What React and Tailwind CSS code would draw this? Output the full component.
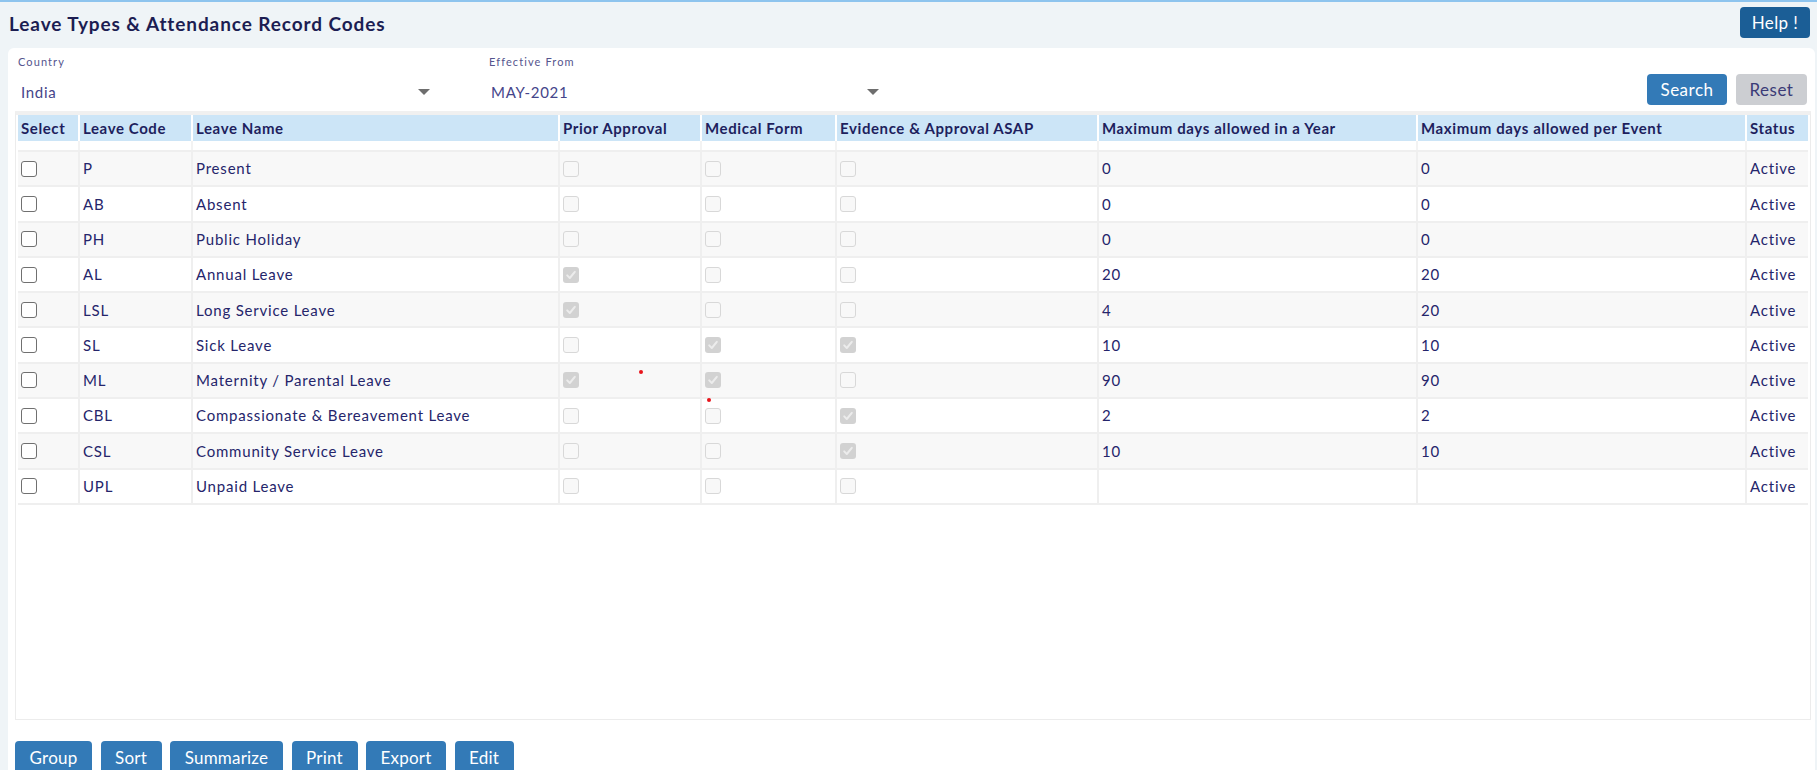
import React from 'react';

const cols = 'grid grid-cols-[60px_111px_365px_140px_133px_260px_317px_327px_61px] gap-x-[2px]';

const headers = [
  'Select',
  'Leave Code',
  'Leave Name',
  'Prior Approval',
  'Medical Form',
  'Evidence & Approval ASAP',
  'Maximum days allowed in a Year',
  'Maximum days allowed per Event',
  'Status',
];

const rows = [
  { code: 'P', name: 'Present', prior: false, medical: false, evidence: false, year: '0', event: '0' },
  { code: 'AB', name: 'Absent', prior: false, medical: false, evidence: false, year: '0', event: '0' },
  { code: 'PH', name: 'Public Holiday', prior: false, medical: false, evidence: false, year: '0', event: '0' },
  { code: 'AL', name: 'Annual Leave', prior: true, medical: false, evidence: false, year: '20', event: '20' },
  { code: 'LSL', name: 'Long Service Leave', prior: true, medical: false, evidence: false, year: '4', event: '20' },
  { code: 'SL', name: 'Sick Leave', prior: false, medical: true, evidence: true, year: '10', event: '10' },
  { code: 'ML', name: 'Maternity / Parental Leave', prior: true, medical: true, evidence: false, year: '90', event: '90' },
  { code: 'CBL', name: 'Compassionate & Bereavement Leave', prior: false, medical: false, evidence: true, year: '2', event: '2' },
  { code: 'CSL', name: 'Community Service Leave', prior: false, medical: false, evidence: true, year: '10', event: '10' },
  { code: 'UPL', name: 'Unpaid Leave', prior: false, medical: false, evidence: false, year: '', event: '' },
];

const actions = [
  { label: 'Group', w: 'w-[77px]' },
  { label: 'Sort', w: 'w-[61px]' },
  { label: 'Summarize', w: 'w-[113px]' },
  { label: 'Print', w: 'w-[66px]' },
  { label: 'Export', w: 'w-[80px]' },
  { label: 'Edit', w: 'w-[59px]' },
];

function Box({ checked, disabled }) {
  if (!disabled) {
    return <div className="w-4 h-4 rounded-[3px] border-[1.5px] border-[#707070] bg-white" />;
  }
  if (checked) {
    return (
      <div className="w-4 h-4 rounded-[3px] bg-[#d2d2d2] flex items-center justify-center">
        <svg width="12" height="12" viewBox="0 0 12 12">
          <path d="M2.2 6.4 L4.8 9 L9.8 2.8" fill="none" stroke="#ececec" strokeWidth="2" strokeLinecap="round" strokeLinejoin="round" />
        </svg>
      </div>
    );
  }
  return <div className="w-4 h-4 rounded-[3px] border-[1.5px] border-[#d8d8d8] bg-[#f8f8f8]" />;
}

function Caret() {
  return <div className="w-0 h-0 border-l-[6px] border-r-[6px] border-t-[6px] border-l-transparent border-r-transparent border-t-[#6e6e6e]" />;
}

function Cell({ children, bg }) {
  return (
    <div className={`${bg} flex items-center pl-[3px] text-[15px] tracking-[0.8px] text-[#25256b] whitespace-nowrap`}>
      {children}
    </div>
  );
}

export default function App() {
  return (
    <div className="w-[1817px] h-[770px] overflow-hidden flex flex-col bg-[#eff4f7] border-t-2 border-[#8ec4ee] font-['Lato',sans-serif]">
      {/* Page header */}
      <div className="h-[46px] flex items-start justify-between shrink-0">
        <h1 className="pl-[9px] pt-[10px] text-[19px] leading-[23px] tracking-[0.9px] font-bold text-[#1c1d52]">
          Leave Types &amp; Attendance Record Codes
        </h1>
        <button className="mt-[5px] mr-[7px] w-[70px] h-[31px] rounded-[4px] bg-[#1b5e96] text-white text-[17px] tracking-[0.4px]">
          Help !
        </button>
      </div>

      {/* Panel */}
      <div className="flex-1 ml-[8px] mr-[2px] bg-white rounded-t-[6px] flex flex-col">
        {/* Filters */}
        <div className="h-[63px] flex pl-[7px] pr-[8px] shrink-0">
          <div className="w-[426px] flex flex-col">
            <div className="pt-[7px] pl-[3px] text-[11px] leading-[14px] tracking-[1.1px] text-[#55558e]">Country</div>
            <div className="mt-auto h-[38px] flex items-center justify-between pl-[6px] pr-[11px] text-[15px] tracking-[0.7px] text-[#45458a]">
              <span>India</span>
              <Caret />
            </div>
          </div>
          <div className="ml-[45px] w-[404px] flex flex-col">
            <div className="pt-[7px] pl-[3px] text-[11px] leading-[14px] tracking-[1.1px] text-[#55558e]">Effective From</div>
            <div className="mt-auto h-[38px] flex items-center justify-between pl-[5px] pr-[11px] text-[15px] tracking-[0.7px] text-[#45458a]">
              <span>MAY-2021</span>
              <Caret />
            </div>
          </div>
          <div className="ml-auto flex items-end gap-[9px] pb-[6px]">
            <button className="w-[80px] h-[31px] rounded-[4px] bg-[#337ab7] text-white text-[17px] tracking-[0.5px]">Search</button>
            <button className="w-[71px] h-[31px] rounded-[4px] bg-[#ccced2] text-[#3b3b77] text-[17px] tracking-[0.5px]">Reset</button>
          </div>
        </div>

        {/* Grid */}
        <div className="ml-[7px] mr-[4px] h-[609px] shrink-0 border border-[#ececec] border-t-[4px] border-t-[#f0f0f0] px-[2px]">
          <div className={`${cols} bg-white`}>
            {headers.map((h) => (
              <div key={h} className="h-[26px] bg-[#cce5f7] flex items-center pl-[3px] text-[15px] tracking-[0.6px] font-bold text-[#1e1f5e] whitespace-nowrap">
                {h}
              </div>
            ))}
          </div>
          <div className={`${cols} bg-[#f3f3f3]`}>
            {headers.map((h) => (
              <div key={h} className="h-[9px] bg-white" />
            ))}
          </div>
          <div className="bg-[#efefef] border-b-2 border-[#efefef]">
            {rows.map((r, i) => {
              const bg = i % 2 === 0 ? 'bg-[#f8f8f8]' : 'bg-white';
              return (
                <div key={r.code} className={`${cols} h-[35.3px] border-t-2 border-[#efefef]`}>
                  <Cell bg={bg}><Box /></Cell>
                  <Cell bg={bg}>{r.code}</Cell>
                  <Cell bg={bg}>{r.name}</Cell>
                  <Cell bg={bg}><Box disabled checked={r.prior} /></Cell>
                  <Cell bg={bg}><Box disabled checked={r.medical} /></Cell>
                  <Cell bg={bg}><Box disabled checked={r.evidence} /></Cell>
                  <Cell bg={bg}>{r.year}</Cell>
                  <Cell bg={bg}>{r.event}</Cell>
                  <Cell bg={bg}>Active</Cell>
                </div>
              );
            })}
          </div>
        </div>

        {/* Footer actions */}
        <div className="ml-[7px] mt-[21px] flex gap-[8.5px]">
          {actions.map((b) => (
            <button key={b.label} className={`${b.w} h-[34px] rounded-[4px] bg-[#337ab7] text-white text-[17px] tracking-[0.2px]`}>
              {b.label}
            </button>
          ))}
        </div>
      </div>

      {/* stray marks present in the capture */}
      <div className="absolute left-[639px] top-[370px] w-[4px] h-[4px] rounded-full bg-[#e8141b]" />
      <div className="absolute left-[707px] top-[398px] w-[4px] h-[4px] rounded-full bg-[#e8141b]" />
    </div>
  );
}
